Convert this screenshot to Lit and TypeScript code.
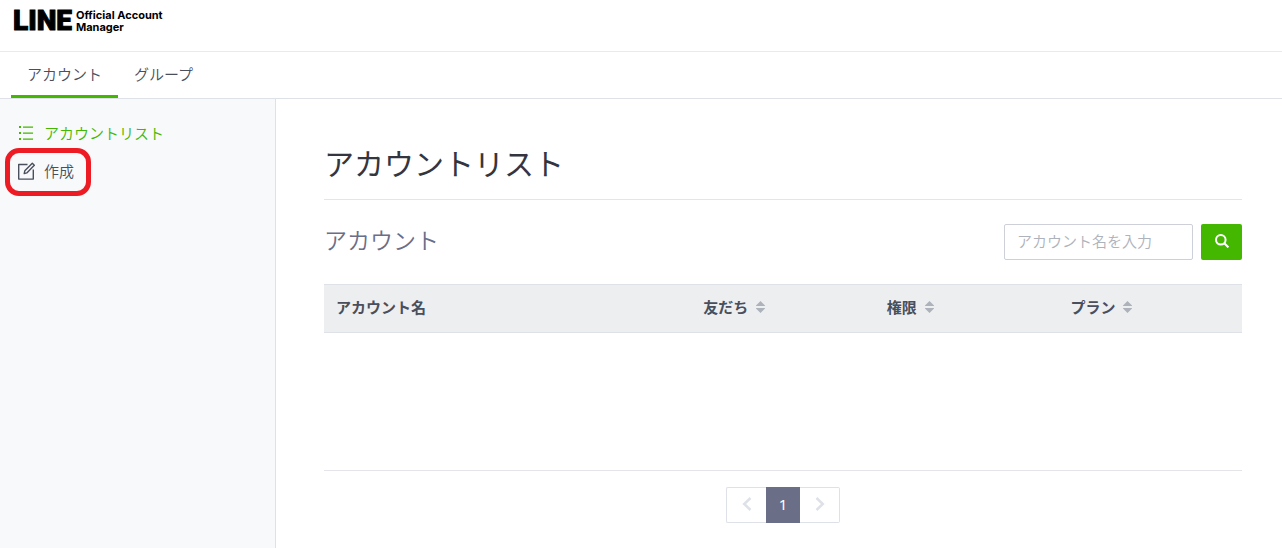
import { LitElement, css, html } from "lit";
import { customElement, state } from "lit/decorators.js";

interface Column {
  key: string;
  label: string;
  sortable: boolean;
}

const COLUMNS: Column[] = [
  { key: "name", label: "アカウント名", sortable: false },
  { key: "friends", label: "友だち", sortable: true },
  { key: "role", label: "権限", sortable: true },
  { key: "plan", label: "プラン", sortable: true },
];

@customElement("app-header")
class AppHeader extends LitElement {
  static styles = css`
    :host {
      display: block;
      border-bottom: 1px solid #e8eaee;
      background: #fff;
    }
    .brand {
      display: inline-flex;
      align-items: center;
      gap: 4px;
      height: 51px;
      padding: 0 13px 9px;
      box-sizing: border-box;
      color: #000;
      text-decoration: none;
    }
    .line {
      font: 900 28px/30px Roboto, sans-serif;
      -webkit-text-stroke: 1px currentColor;
    }
    .product {
      font: 700 11px/12px Inter, sans-serif;
    }
  `;

  render() {
    return html`
      <a class="brand" href="#">
        <span class="line">LINE</span>
        <span class="product">Official Account<br />Manager</span>
      </a>
    `;
  }
}

@customElement("app-tabs")
class AppTabs extends LitElement {
  static styles = css`
    :host {
      display: block;
      padding-left: 11px;
      border-bottom: 1px solid #dee1e7;
      background: #fff;
    }
    nav {
      display: flex;
    }
    .tab {
      box-sizing: border-box;
      height: 46px;
      padding: 0 16px;
      border-bottom: 3px solid transparent;
      color: #494f5c;
      font-size: 15px;
      line-height: 44px;
      text-decoration: none;
    }
    .active {
      border-bottom-color: #44b700;
    }
  `;

  render() {
    return html`
      <nav>
        <a class="tab active" href="#accounts" aria-current="page">アカウント</a>
        <a class="tab" href="#groups">グループ</a>
      </nav>
    `;
  }
}

@customElement("app-sidebar")
class AppSidebar extends LitElement {
  static styles = css`
    :host {
      display: block;
      box-sizing: border-box;
      padding: 15px 17px;
      border-right: 1px solid #dee1e7;
      background: #f7f9fb;
    }
    ul {
      display: flex;
      flex-direction: column;
      margin: 0;
      padding: 0;
      list-style: none;
    }
    li {
      position: relative;
    }
    .item {
      display: flex;
      align-items: center;
      gap: 9px;
      height: 38px;
      color: #494f5c;
      font-size: 15px;
      text-decoration: none;
    }
    .label {
      padding-bottom: 2px;
    }
    .current {
      color: #44b700;
    }
    svg {
      flex: none;
    }
    .marker {
      position: absolute;
      top: -4px;
      left: -12px;
      box-sizing: border-box;
      width: 86px;
      height: 48px;
      border: 5px solid #ed1c24;
      border-radius: 14px;
      pointer-events: none;
    }
  `;

  render() {
    return html`
      <ul>
        <li>
          <a class="item current" href="#list" aria-current="page">
            <svg width="18" height="18" viewBox="0 0 18 18" fill="currentColor" aria-hidden="true">
              <path d="M2 2h2v2H2zM2 8h2v2H2zM2 14h2v2H2zM6 2.400h10v1.300H6zM6 8.400h10v1.300H6zM6 14.400h10v1.300H6z" />
            </svg>
            <span class="label">アカウントリスト</span>
          </a>
        </li>
        <li>
          <a class="item" href="#create">
            <svg
              width="18"
              height="18"
              viewBox="0 0 18 18"
              fill="none"
              stroke="currentColor"
              stroke-width="1.4"
              stroke-linejoin="round"
              aria-hidden="true"
            >
              <path d="M10.500 2.500H1.700v14.600h14.600V7.500" />
              <path d="M7.200 11.600l.6-2.800L15.300 1.300l2 2-7.500 7.600z" />
            </svg>
            <span class="label">作成</span>
          </a>
          <div class="marker"></div>
        </li>
      </ul>
    `;
  }
}

@customElement("account-list")
class AccountList extends LitElement {
  static styles = css`
    :host {
      display: block;
      padding: 40px 40px 25px 48px;
    }
    h1 {
      margin: 0;
      padding-bottom: 14px;
      border-bottom: 1px solid #e3e5e9;
      color: #34363f;
      font-size: 30px;
      font-weight: 400;
      line-height: 46px;
    }
    .toolbar {
      display: flex;
      align-items: flex-start;
      justify-content: space-between;
      padding: 24px 0;
    }
    h2 {
      margin: 0;
      color: #6a6e87;
      font-size: 23px;
      font-weight: 350;
      line-height: 30px;
    }
    .search {
      display: flex;
      gap: 8px;
    }
    input {
      box-sizing: border-box;
      width: 189px;
      height: 36px;
      margin: 0;
      padding: 0 12px 3px;
      border: 1px solid #cdd0d8;
      border-radius: 2px;
      background: #fff;
      color: #494f5c;
      font: inherit;
      font-size: 15px;
    }
    input::placeholder {
      color: #adb2bb;
      opacity: 1;
    }
    .go {
      display: flex;
      align-items: center;
      justify-content: center;
      width: 41px;
      height: 36px;
      padding: 0 0 2px;
      border: 0;
      border-radius: 2px;
      background: #44b700;
      color: #fff;
    }
    table {
      width: 100%;
      border-collapse: collapse;
      table-layout: fixed;
    }
    th {
      box-sizing: border-box;
      width: 20%;
      height: 49px;
      padding: 0 12px 4px;
      background: #edeef0;
      box-shadow: inset 0 1px #dee1e7, inset 0 -1px #dee1e7;
      color: #494f5c;
      font-size: 15px;
      font-weight: 700;
      text-align: left;
    }
    .name {
      width: 40%;
    }
    .sort {
      display: inline-flex;
      align-items: center;
      gap: 8px;
      padding: 0;
      border: 0;
      background: none;
      color: inherit;
      font: inherit;
    }
    .sort svg {
      fill: #adb2bb;
    }
    .empty {
      height: 137px;
      border-bottom: 1px solid #e3e5e9;
    }
    .pager {
      display: flex;
      justify-content: center;
      padding-top: 16px;
    }
    .page {
      display: flex;
      align-items: center;
      justify-content: center;
      box-sizing: border-box;
      width: 40px;
      height: 36px;
      padding: 0 0 2px;
      border: 1px solid #dee1e7;
      background: #fff;
      color: #dee1e7;
      font: 400 15px "Noto Sans", sans-serif;
    }
    .prev {
      border-right: 0;
      border-radius: 2px 0 0 2px;
    }
    .next {
      border-left: 0;
      border-radius: 0 2px 2px 0;
    }
    .on {
      width: 34px;
      border-color: #6a6e87;
      background: #6a6e87;
      color: #fff;
    }
  `;

  @state() private query = "";

  private onInput(e: Event) {
    this.query = (e.target as HTMLInputElement).value;
  }

  private renderColumn(col: Column) {
    if (!col.sortable) {
      return html`<th class="name" scope="col">${col.label}</th>`;
    }
    return html`
      <th scope="col">
        <button class="sort" type="button">
          ${col.label}
          <svg width="9" height="12" viewBox="0 0 9 12" aria-hidden="true">
            <path d="M4.500 0L9 4.400V5H0v-.6zM0 7h9v.6L4.500 12 0 7.600z" />
          </svg>
        </button>
      </th>
    `;
  }

  render() {
    return html`
      <h1>アカウントリスト</h1>
      <div class="toolbar">
        <h2>アカウント</h2>
        <form class="search" role="search" @submit=${(e: Event) => e.preventDefault()}>
          <input
            type="text"
            aria-label="アカウント名を入力"
            placeholder="アカウント名を入力"
            .value=${this.query}
            @input=${this.onInput}
          />
          <button class="go" type="submit" aria-label="検索">
            <svg width="14" height="14" viewBox="0 0 14 14" fill="none" stroke="currentColor" stroke-width="2" aria-hidden="true">
              <circle cx="5.800" cy="5.800" r="4.800" />
              <path d="M9.300 9.300L13.400 13.400" />
            </svg>
          </button>
        </form>
      </div>
      <table>
        <thead>
          <tr>
            ${COLUMNS.map((c) => this.renderColumn(c))}
          </tr>
        </thead>
      </table>
      <div class="empty"></div>
      <nav class="pager">
        <button class="page prev" type="button" aria-label="前へ">
          <svg width="10" height="14" viewBox="0 0 10 14" fill="none" stroke="currentColor" stroke-width="2.500" aria-hidden="true">
            <path d="M8.500 1L2.200 7l6.300 6" />
          </svg>
        </button>
        <button class="page on" type="button" aria-current="page">1</button>
        <button class="page next" type="button" aria-label="次へ">
          <svg width="10" height="14" viewBox="0 0 10 14" fill="none" stroke="currentColor" stroke-width="2.500" aria-hidden="true">
            <path d="M1.500 1l6.300 6-6.300 6" />
          </svg>
        </button>
      </nav>
    `;
  }
}

@customElement("app-root")
class AppRoot extends LitElement {
  static styles = css`
    :host {
      display: flex;
      flex-direction: column;
      min-height: 100vh;
      background: #fff;
      font-family: "Noto Sans CJK JP", sans-serif;
      font-weight: 350;
    }
    .body {
      display: grid;
      flex: 1;
      grid-template-columns: 276px minmax(0, 1fr);
    }
  `;

  render() {
    return html`
      <app-header></app-header>
      <app-tabs></app-tabs>
      <div class="body">
        <app-sidebar></app-sidebar>
        <account-list></account-list>
      </div>
    `;
  }
}
